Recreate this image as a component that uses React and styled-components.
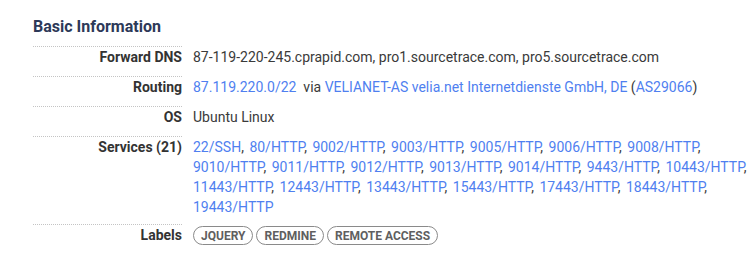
import React from 'react';
import styled, { createGlobalStyle } from 'styled-components';

const GlobalStyle = createGlobalStyle`
  body {
    margin: 0;
    background: #fff;
    font-family: Roboto, "Liberation Sans", sans-serif;
    color: #333;
  }
`;

const Section = styled.section`
  padding: 15px 0 0 33px;
  width: 719px;
`;

const Title = styled.h2`
  margin: 0 0 7px;
  font-size: 16px;
  line-height: 24px;
  font-weight: 700;
  color: #2d3958;
`;

const Row = styled.div`
  display: flex;
  min-height: 30px;
  padding-bottom: 7px;
  box-sizing: border-box;
  font-size: 14px;
  line-height: 20px;
`;

const Label = styled.div`
  width: 149px;
  flex-shrink: 0;
  border-top: 1px dotted #c4c4c4;
  margin-bottom: -7px;
  text-align: right;
  font-weight: 700;
  color: #333;
`;

const Value = styled.div`
  flex: 1;
  padding: 1px 0 0 11px;
  color: #3a3a3a;
`;

const Link = styled.a`
  color: #4f7ff0;
  text-decoration: none;
`;

const Sep = styled.span`
  margin-right: 2px;
`;

const Tags = styled.div`
  display: flex;
  align-items: flex-start;
  gap: 3px;
  padding: 2px 0 0 11px;
`;

const Tag = styled.span`
  display: inline-flex;
  align-items: center;
  height: 19px;
  box-sizing: border-box;
  padding: 0 7px;
  border: 1px solid #8a8a8a;
  border-radius: 10px;
  font-size: 12px;
  font-weight: 700;
  color: #5f5f5f;
  text-transform: uppercase;
`;

const services = [
  '22/SSH', '80/HTTP', '9002/HTTP', '9003/HTTP', '9005/HTTP', '9006/HTTP', '9008/HTTP',
  '9010/HTTP', '9011/HTTP', '9012/HTTP', '9013/HTTP', '9014/HTTP', '9443/HTTP', '10443/HTTP',
  '11443/HTTP', '12443/HTTP', '13443/HTTP', '15443/HTTP', '17443/HTTP', '18443/HTTP',
  '19443/HTTP'
];

const labels = ['jquery', 'redmine', 'remote access'];

const App = () => {
  return (
    <>
      <GlobalStyle />
      <Section>
        <Title>Basic Information</Title>

        <Row>
          <Label>Forward DNS</Label>
          <Value>87-119-220-245.cprapid.com, pro1.sourcetrace.com, pro5.sourcetrace.com</Value>
        </Row>

        <Row>
          <Label>Routing</Label>
          <Value>
            <Link href="#">87.119.220.0/22</Link>&nbsp; via <Link href="#">VELIANET-AS velia.net Internetdienste GmbH, DE</Link> (<Link href="#">AS29066</Link>)
          </Value>
        </Row>

        <Row>
          <Label>OS</Label>
          <Value>Ubuntu Linux</Value>
        </Row>

        <Row>
          <Label>Services ({services.length})</Label>
          <Value>
            {services.map((s, i) => (
              <React.Fragment key={s}>
                <Link href="#">{s}</Link>{i < services.length - 1 && <Sep>,</Sep>}{' '}
              </React.Fragment>
            ))}
          </Value>
        </Row>

        <Row>
          <Label>Labels</Label>
          <Tags>
            {labels.map(l => <Tag key={l}>{l}</Tag>)}
          </Tags>
        </Row>
      </Section>
    </>
  );
};

export default App;
